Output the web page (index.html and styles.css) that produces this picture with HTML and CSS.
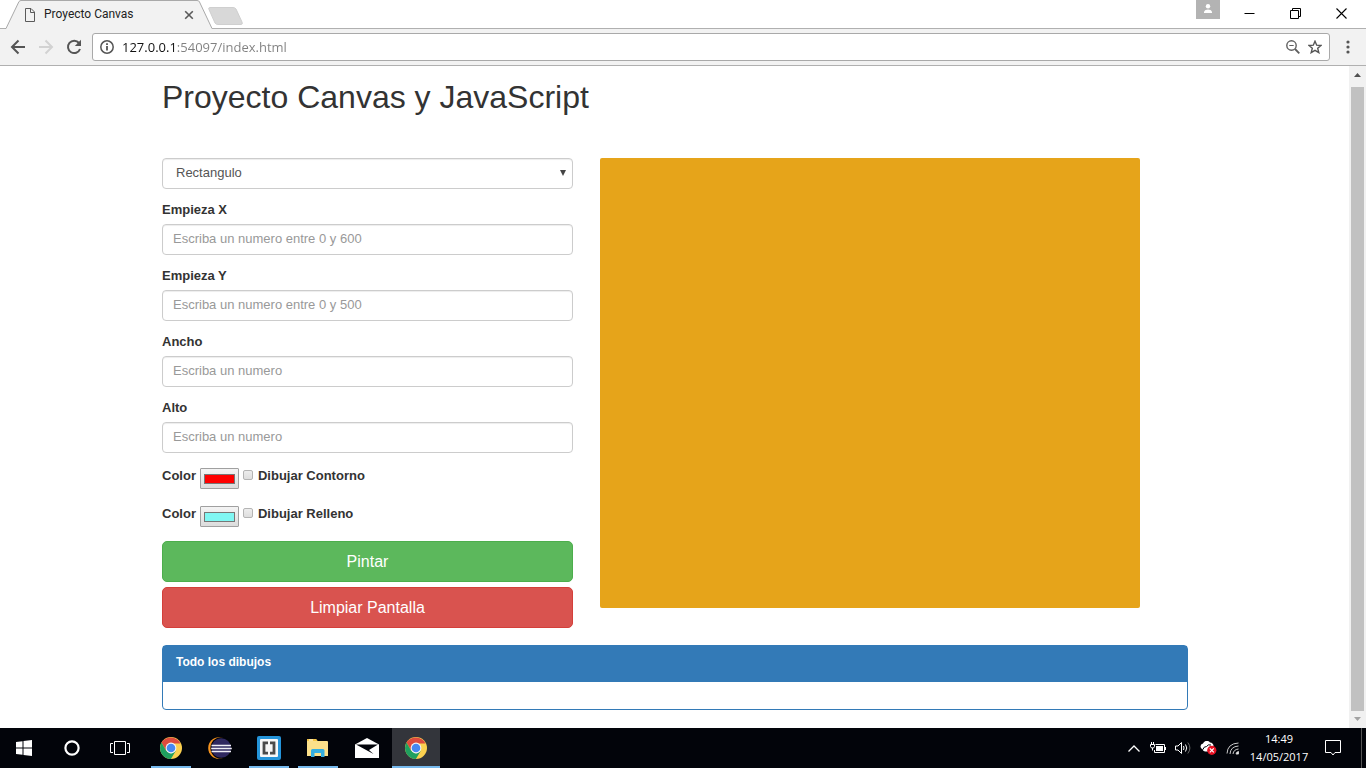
FILE: index.html
```html
<!DOCTYPE html>
<html lang="es">
<head>
<meta charset="utf-8">
<title>Proyecto Canvas</title>
<link rel="stylesheet" href="styles.css">
</head>
<body>
<svg class="defs" aria-hidden="true">
  <symbol id="chrome" viewBox="0 0 22 22">
    <circle cx="11" cy="11" r="11" fill="#fbd04f"/>
    <path d="M1.500 5.500A11 11 0 0 1 20.500 6.500H11L6.200 13.700Z" fill="#dd4b3e"/>
    <path d="M1.500 5.500A11 11 0 0 0 10.900 22L15.800 13.700L11 16.500L6.200 13.700Z" fill="#1fa05f"/>
    <circle cx="11" cy="11" r="5.400" fill="#f4f4f4"/>
    <circle cx="11" cy="11" r="4.300" fill="#4688f1"/>
  </symbol>
</svg>

<header class="tabstrip">
  <div class="tab">
    <svg class="tab-shape" width="208" height="29" viewBox="0 0 208 29"><path d="M0 29V28.500H1L14 1.500Q15 .5 16 .5H192Q194 .5 194.500 2L207 28.500V29Z" fill="#f2f2f2"/><path d="M0 28.500H1L14 1.500Q15 .5 16 .5H192Q194 .5 194.500 2L207 28.500" fill="none" stroke="#a9a9a9"/></svg>
    <svg class="tab-file" width="12" height="14" viewBox="0 0 12 14" fill="none" stroke="#5a5a5a"><path d="M1.500.5H7L10.500 4V13.500H1.500ZM6.500.5V4.500H10.500"/></svg>
    <span class="tab-title">Proyecto Canvas</span>
    <button class="tab-close" aria-label="Cerrar pestaña"><svg width="10" height="10" viewBox="0 0 10 10"><path d="M1.200 1.200 8.800 8.800M8.800 1.200 1.200 8.800" stroke="#5a5a5a" stroke-width="1.600"/></svg></button>
  </div>
  <button class="new-tab" aria-label="Nueva pestaña"><svg width="36" height="18" viewBox="0 0 36 18"><path d="M2 .5H25Q27 .5 28 2L34 15Q35 17.500 33 17.500H10Q8 17.500 7 16L1 2.500Q0 .5 2 .5Z" fill="#d8d8d8" stroke="#cfcfcf"/></svg></button>
  <button class="profile" aria-label="Perfil"><svg width="10" height="10" viewBox="0 0 10 10" fill="#fff"><circle cx="5" cy="2.300" r="2.200"/><path d="M1 9V7.500Q2 5.500 5 5.500T9 7.500V9Z"/></svg></button>
  <div class="window-buttons">
    <button aria-label="Minimizar"><svg width="11" height="11" viewBox="0 0 11 11"><path d="M.5 5.500H10.500" stroke="#000"/></svg></button>
    <button aria-label="Restaurar"><svg width="11" height="11" viewBox="0 0 11 11" fill="none" stroke="#000"><path d="M.5 2.500H8.500V10.500H.5ZM2.500 2V.5H10.500V8.500H9"/></svg></button>
    <button aria-label="Cerrar"><svg width="11" height="11" viewBox="0 0 11 11"><path d="M.5.5 10.500 10.500M10.500.5.5 10.500" stroke="#000" stroke-width="1.100"/></svg></button>
  </div>
</header>

<nav class="toolbar">
  <button aria-label="Atrás"><svg width="16" height="16" viewBox="0 0 16 16" fill="none" stroke="#555" stroke-width="2"><path d="M15 8H2.500M8.500 1.500 2 8 8.500 14.500"/></svg></button>
  <button aria-label="Adelante"><svg width="16" height="16" viewBox="0 0 16 16" fill="none" stroke="#d2d2d2" stroke-width="2"><path d="M1 8H13.500M7.500 1.500 14 8 7.500 14.500"/></svg></button>
  <button aria-label="Recargar"><svg width="16" height="16" viewBox="0 0 16 16"><path d="M13 4A6.200 6.200 0 1 0 14 10" fill="none" stroke="#555" stroke-width="2"/><path d="M15 .8V7H8.800Z" fill="#555"/></svg></button>
  <div class="omnibox">
    <svg width="14" height="14" viewBox="0 0 14 14"><circle cx="7" cy="7" r="6.200" fill="none" stroke="#555" stroke-width="1.500"/><path d="M7 6V10.500M7 3.200V5" stroke="#555" stroke-width="1.800"/></svg>
    <input class="url" type="text" aria-label="Dirección" value="127.0.0.1:54097/index.html">
    <svg width="14" height="14" viewBox="0 0 14 14" fill="none" stroke="#5f5f5f"><circle cx="5.500" cy="5.500" r="4.700" stroke-width="1.400"/><path d="M9 9 13.300 13.300" stroke-width="1.800"/><path d="M3.300 5.500H7.700"/></svg>
    <svg width="14" height="14" viewBox="0 0 14 14"><path d="M7 1.200 8.700 5.200 13 5.500 9.700 8.300 10.800 12.600 7 10.300 3.200 12.600 4.300 8.300 1 5.500 5.300 5.200Z" fill="none" stroke="#555" stroke-width="1.400"/></svg>
  </div>
  <button class="menu" aria-label="Menú"><svg width="4" height="14" viewBox="0 0 4 14" fill="#555"><circle cx="2" cy="2" r="1.600"/><circle cx="2" cy="7" r="1.600"/><circle cx="2" cy="12" r="1.600"/></svg></button>
</nav>

<div class="viewport">
  <main class="page">
    <div class="container">
      <h1>Proyecto Canvas y JavaScript</h1>
      <div class="columns">
        <form class="controls">
          <div class="select-wrap">
            <select class="field select" aria-label="Figura"><option>Rectangulo</option></select>
            <svg class="caret" width="6" height="6" viewBox="0 0 6 6"><path d="M0 0H6L3 6Z" fill="#444"/></svg>
          </div>
          <div class="group"><label for="x">Empieza X</label><input class="field" id="x" type="text" placeholder="Escriba un numero entre 0 y 600"></div>
          <div class="group"><label for="y">Empieza Y</label><input class="field" id="y" type="text" placeholder="Escriba un numero entre 0 y 500"></div>
          <div class="group"><label for="w">Ancho</label><input class="field" id="w" type="text" placeholder="Escriba un numero"></div>
          <div class="group"><label for="h">Alto</label><input class="field" id="h" type="text" placeholder="Escriba un numero"></div>
          <div class="colors">
            <div class="color-row"><label for="c1">Color</label><input class="swatch" id="c1" type="color" value="#ff0000"><input class="check" id="k1" type="checkbox"><label for="k1">Dibujar Contorno</label></div>
            <div class="color-row"><label for="c2">Color</label><input class="swatch" id="c2" type="color" value="#80f7f3"><input class="check" id="k2" type="checkbox"><label for="k2">Dibujar Relleno</label></div>
          </div>
          <div class="actions">
            <button type="button" class="btn success">Pintar</button>
            <button type="button" class="btn danger">Limpiar Pantalla</button>
          </div>
        </form>
        <canvas class="drawing" width="600" height="500"></canvas>
      </div>
      <section class="panel">
        <h2>Todo los dibujos</h2>
        <div class="panel-body"></div>
      </section>
    </div>
  </main>
  <div class="scrollbar" aria-hidden="true">
    <svg width="7" height="4" viewBox="0 0 7 4"><path d="M3.500 0 7 4H0Z" fill="#505050"/></svg>
    <div class="thumb"></div>
    <svg width="7" height="4" viewBox="0 0 7 4"><path d="M0 0H7L3.500 4Z" fill="#a3a3a3"/></svg>
  </div>
</div>

<footer class="taskbar">
  <div class="system">
    <button aria-label="Inicio"><svg width="16" height="16" viewBox="0 0 16 16" fill="#fff"><path d="M0 2 6.500 1.200V7.500H0ZM7.500 1 16 0V7.500H7.500ZM0 8.500H6.500V14.800L0 14ZM7.500 8.500H16V16L7.500 15Z"/></svg></button>
    <button aria-label="Cortana"><svg width="16" height="16" viewBox="0 0 16 16"><circle cx="8" cy="8" r="6.600" fill="none" stroke="#fff" stroke-width="2.200"/></svg></button>
    <button aria-label="Vista de tareas"><svg width="20" height="14" viewBox="0 0 20 14" fill="none" stroke="#fff"><path d="M4.500.5H15.500V13.500H4.500ZM3 2.500H.5V11.500H3M17 2.500H19.500V11.500H17"/></svg></button>
  </div>
  <div class="apps">
    <button class="open" aria-label="Google Chrome"><svg width="22" height="22"><use href="#chrome"/></svg></button>
    <button aria-label="Eclipse"><svg width="24" height="22" viewBox="0 0 24 22"><circle cx="11" cy="11" r="10.800" fill="#f7941e"/><circle cx="13.200" cy="11" r="10.800" fill="#02040a"/><circle cx="13.200" cy="11" r="9.800" fill="#2f2860"/><path d="M3.500 8.500H23M3.200 11.500H23.800M3.500 14.500H23" stroke="#f0eff6" stroke-width="1.500"/></svg></button>
    <button class="open" aria-label="Brackets"><svg width="24" height="24" viewBox="0 0 24 24"><rect width="24" height="24" rx="2" fill="#2494da"/><rect x="3" y="3" width="18" height="18" rx="1" fill="#f7f7f7"/><path d="M11 6.800H7V17.200H11M13 6.800H17V17.200H13" fill="none" stroke="#4b4b4b" stroke-width="2.800"/></svg></button>
    <button class="open" aria-label="Explorador de archivos"><svg width="22" height="20" viewBox="0 0 22 20"><path d="M0 2Q0 1 1 1H9L10.500 3H20Q21 3 21 4V18H0Z" fill="#fce08a"/><path d="M0 2Q0 1 1 1H9L10.500 3H0Z" fill="#f5c542"/><path d="M2 2H6" stroke="#fff"/><path d="M4 19V12.500Q4 11 5.500 11H16Q17.500 11 17.500 12.500V19H14V15H7.500V19Z" fill="#35aee0"/></svg></button>
    <button aria-label="Correo"><svg width="24" height="20" viewBox="0 0 24 20"><path d="M0 6.500 12 0 24 6.500V20H0Z" fill="#fff"/><path d="M1 6.500H23L14 12 18.500 16 1 6.500Z" fill="#02040a"/></svg></button>
    <button class="open active" aria-label="Google Chrome, ventana activa"><svg width="22" height="22"><use href="#chrome"/></svg></button>
  </div>
  <div class="tray">
    <svg width="12" height="7" viewBox="0 0 12 7" fill="none" stroke="#fff" stroke-width="1.300"><path d="M.5 6.500 6 1 11.500 6.500"/></svg>
    <svg width="16" height="12" viewBox="0 0 16 12" fill="none" stroke="#fff"><path d="M5.500 2.500H14.500V10.500H4.500V8M1.500 0V2M3.500 0V2M.5 2.500H4.500V4.500L3.500 6H1.500L.5 4.500ZM2.500 6V8.500"/><path d="M6 4H13V9H6Z" fill="#fff" stroke="none"/><path d="M15.500 5V8"/></svg>
    <svg width="16" height="14" viewBox="0 0 16 14" fill="none" stroke="#fff"><path d="M.5 5V9H3L6.500 12.500V1.500L3 5ZM8.500 5Q9.500 7 8.500 9"/><path d="M10.500 3.500Q13 7 10.500 10.500"/><path d="M12.800 1.500Q17 7 12.800 12.500" stroke="#666"/></svg>
    <svg width="17" height="14" viewBox="0 0 17 14"><path d="M.5 5.500A3 3 0 0 1 3 2.500 4 4 0 0 1 10 1.500 3.500 3.500 0 0 1 13.500 5.500L10 10.500H5A3 3 0 0 1 2.500 8Q.5 7.500.5 5.500Z" fill="#fff"/><path d="M3 8.500Q3.500 5.500 6.500 5.500 8 3 11 4" fill="none" stroke="#02040a"/><circle cx="11.800" cy="9.300" r="4.600" fill="#e81123"/><path d="M9.800 7.300 13.800 11.300M13.800 7.300 9.800 11.300" stroke="#fff" stroke-width="1.200"/></svg>
    <svg width="14" height="14" viewBox="0 0 14 14" fill="none" stroke="#ccc"><path d="M1 12.500Q1.500 2.500 12.500 2M4 13Q4.500 5.500 12.500 5M7 13Q7.500 8.500 12.500 8"/><path d="M10 13Q10 11 12.500 10.500V13Z" fill="#fff"/></svg>
    <div class="clock"><time>14:49</time><time>14/05/2017</time></div>
    <button class="notifications" aria-label="Notificaciones"><svg width="16" height="16" viewBox="0 0 16 16" fill="none" stroke="#fff"><path d="M.5.5H15.500V12.500H10L8 15 6 12.500H.5Z"/></svg></button>
    <div class="show-desktop"></div>
  </div>
</footer>
</body>
</html>
```

FILE: styles.css
```css
* { box-sizing: border-box; }
html, body { height: 100%; }
body {
  margin: 0;
  display: flex;
  flex-direction: column;
  overflow: hidden;
  background: #fff;
  color: #333;
  font-family: "Liberation Sans", Arial, sans-serif;
  font-size: 13px;
  line-height: 17px;
}
button { padding: 0; border: 0; background: none; font: inherit; }
svg { display: block; flex: none; }
.defs { position: absolute; width: 0; height: 0; }

/* Browser window */
.tabstrip {
  display: flex;
  flex: none;
  height: 29px;
  padding: 0 2px 0 5px;
  border-bottom: 1px solid #b0b0b0;
  font-family: Roboto, sans-serif;
  font-size: 12px;
}
.tab {
  position: relative;
  display: flex;
  align-items: center;
  width: 208px;
  height: 29px;
  padding: 0 19px;
  gap: 8px;
  color: #222;
}
.tab-shape { position: absolute; left: 0; top: 0; }
.tab-file, .tab-title, .tab-close { position: relative; }
.tab-title { flex: 1; white-space: nowrap; }
.new-tab { align-self: flex-start; margin: 7px 0 0 -5px; }
.profile {
  display: flex;
  justify-content: center;
  width: 24px;
  height: 19px;
  margin: 0 6px 0 auto;
  padding-top: 4px;
  background: #b3b3b3;
}
.window-buttons { display: flex; }
.window-buttons button {
  display: grid;
  place-items: center;
  width: 46px;
  height: 27px;
}
.toolbar {
  display: flex;
  flex: none;
  align-items: center;
  gap: 12px;
  height: 37px;
  padding: 0 10px;
  border-bottom: 1px solid #b0b0b0;
  background: #f2f2f2;
}
.menu { width: 16px; display: grid; place-items: center; }
.omnibox {
  display: flex;
  flex: 1;
  align-items: center;
  gap: 8px;
  height: 28px;
  margin-left: -2px;
  margin-right: -2px;
  padding: 0 7px;
  border: 1px solid #a9a9a9;
  border-radius: 3px;
  background: #fff;
}
.url {
  flex: 1;
  min-width: 0;
  padding: 0;
  border: 0;
  outline: 0;
  background: linear-gradient(90deg, #111 54px, #808080 54px);
  background-clip: text;
  -webkit-background-clip: text;
  color: transparent;
  font: 13px/20px "Open Sans", sans-serif;
}

/* Page */
.viewport { display: flex; flex: 1; min-height: 0; }
.page { flex: 1; padding-left: 1px; overflow: hidden; }
.container { max-width: 1026px; margin: 0 auto; }
h1 {
  margin: 0;
  padding: 13px 0 43px;
  font-size: 32px;
  font-weight: 400;
  line-height: 36px;
}
.columns { display: grid; grid-template-columns: 411fr 588fr; column-gap: 27px; }
.controls { display: flex; flex-direction: column; gap: 14px; }
.select-wrap { position: relative; }
.caret { position: absolute; right: 7px; top: 12px; pointer-events: none; }
.field {
  display: block;
  width: 100%;
  height: 31px;
  padding: 0 10px 2px;
  border: 1px solid #ccc;
  border-radius: 4px;
  background: #fff;
  box-shadow: inset 0 1px 1px rgba(0, 0, 0, .075);
  color: #555;
  font: inherit;
}
.field::placeholder { color: #999; opacity: 1; }
.select { appearance: none; padding-left: 13px; }
label { font-weight: 700; }
.group { display: flex; flex-direction: column; gap: 6px; margin-top: -2px; }
.colors { display: flex; flex-direction: column; gap: 16px; }
.color-row { display: flex; align-items: flex-start; gap: 4px; height: 22px; }
.swatch {
  appearance: none;
  width: 39px;
  height: 21px;
  margin: 1px 0 0;
  padding: 5px 3px 4px;
  border: 1px solid #a0a0a0;
  border-radius: 1px;
  background: linear-gradient(#f4f4f4, #dcdcdc);
}
.swatch::-webkit-color-swatch-wrapper { padding: 0; }
.swatch::-webkit-color-swatch { border: 1px solid #777; border-radius: 0; }
.check {
  appearance: none;
  width: 10px;
  height: 10px;
  margin: 3px 1px 0 0;
  border: 1px solid #b4b4b4;
  border-radius: 2px;
  background: linear-gradient(#ededed, #dedede);
}
.actions { display: flex; flex-direction: column; gap: 5px; }
.btn {
  height: 41px;
  border: 1px solid;
  border-radius: 5px;
  color: #fff;
  font-size: 16px;
}
.success { background: #5cb85c; border-color: #4cae4c; }
.danger { background: #d9534f; border-color: #d43f3a; }
.drawing {
  width: 100%;
  max-width: 540px;
  height: auto;
  aspect-ratio: 6 / 5;
  border-radius: 2px;
  background: #e6a41a;
}
.panel {
  margin-top: 17px;
  border: 1px solid #337ab7;
  border-radius: 4px;
}
.panel h2 {
  margin: 0;
  padding: 8px 13px 11px;
  background: #337ab7;
  color: #fff;
  font-size: 12px;
  line-height: 17px;
}
.panel-body { height: 27px; }
.scrollbar {
  display: flex;
  flex-direction: column;
  align-items: center;
  gap: 7px;
  width: 17px;
  padding: 7px 0;
  background: #f1f1f1;
}
.thumb { flex: 1; width: 13px; margin: 3px 0 -1px; background: #c1c1c1; }

/* Taskbar */
.taskbar {
  display: flex;
  flex: none;
  height: 40px;
  background: #02040a;
  color: #fff;
}
.system, .apps { display: flex; }
.apps { gap: 1px; margin-left: 3px; }
.system button, .apps button {
  display: grid;
  place-items: center;
  width: 48px;
  height: 40px;
}
.open {
  background: linear-gradient(#76b9ed, #76b9ed) bottom / 40px 2px no-repeat;
}
.active { background-color: #33353b; background-size: 48px 2px; }
.tray { display: flex; align-items: center; gap: 9px; margin-left: auto; }
.tray > svg:first-child { margin-right: 1px; }
.clock {
  display: flex;
  flex-direction: column;
  align-items: center;
  width: 60px;
  font: 11px/18px "Open Sans", sans-serif;
}
.notifications { margin: 0 11px 0 7px; }
.show-desktop { align-self: stretch; width: 5px; border-left: 1px solid #555; }
```
